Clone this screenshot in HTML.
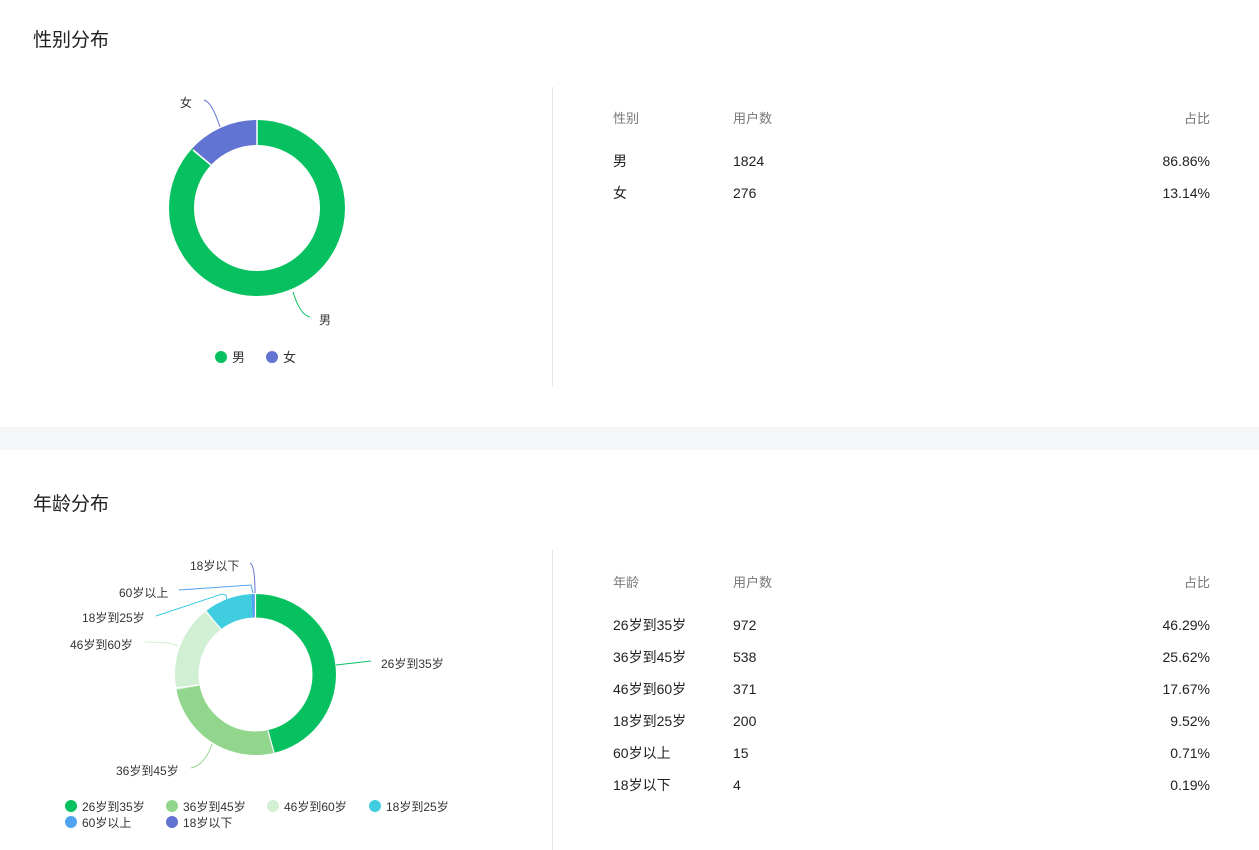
<!DOCTYPE html>
<html><head><meta charset="utf-8"><style>
body{margin:0;width:1259px;height:850px;background:#fff;font-family:"Liberation Sans","Noto Sans CJK SC",sans-serif;color:#222;position:relative;overflow:hidden}
.a{position:absolute;white-space:nowrap}
.t{font-size:19px;color:#222}
.h{font-size:13px;color:#777}
.r{font-size:14px;color:#222;line-height:18px}
</style></head><body>
<div class="a t" style="left:33px;top:25px">性别分布</div>
<div class="a" style="left:552px;top:87px;width:1px;height:300px;background:#e6e6e6"></div>
<div class="a" style="left:0;top:427px;width:1259px;height:23px;background:#f5f6f8"></div>
<div class="a t" style="left:33px;top:489px">年龄分布</div>
<div class="a" style="left:552px;top:550px;width:1px;height:300px;background:#e6e6e6"></div>

<svg class="a" style="left:0;top:0" width="552" height="850">
<g transform="rotate(-90 257 208)" fill="none" stroke-width="25">
<circle cx="257" cy="208" r="75.5" stroke="#07c160" stroke-dasharray="412.1 1000"/>
<circle cx="257" cy="208" r="75.5" stroke="#6274d1" stroke-dasharray="62.3 1000" stroke-dashoffset="-412.1"/>
</g>
<line x1="257" y1="120" x2="257" y2="146" stroke="#fff" stroke-width="1.5"/>
<line x1="193" y1="150" x2="211" y2="165" stroke="#fff" stroke-width="1.5"/>
<path d="M204 100 Q212 102 220 127" stroke="#6274d1" fill="none"/>
<path d="M293 292 Q300 315 310 317" stroke="#07c160" fill="none"/>
<text x="180" y="107" font-size="12" fill="#333">女</text>
<text x="319" y="324" font-size="12" fill="#333">男</text>
<circle cx="221" cy="357" r="6" fill="#07c160"/><text x="232" y="362" font-size="13" fill="#333">男</text>
<circle cx="272" cy="357" r="6" fill="#6274d1"/><text x="283" y="362" font-size="13" fill="#333">女</text>

<g transform="rotate(-90 255.5 674.5)" fill="none" stroke-width="23.5">
<circle cx="255.5" cy="674.5" r="68.75" stroke="#07c160" stroke-dasharray="199.96 1000"/>
<circle cx="255.5" cy="674.5" r="68.75" stroke="#91d68c" stroke-dasharray="110.67 1000" stroke-dashoffset="-199.96"/>
<circle cx="255.5" cy="674.5" r="68.75" stroke="#d1f0d3" stroke-dasharray="76.33 1000" stroke-dashoffset="-310.63"/>
<circle cx="255.5" cy="674.5" r="68.75" stroke="#40cde0" stroke-dasharray="41.12 1000" stroke-dashoffset="-386.96"/>
<circle cx="255.5" cy="674.5" r="68.75" stroke="#4ea4f0" stroke-dasharray="3.07 1000" stroke-dashoffset="-428.08"/>
<circle cx="255.5" cy="674.5" r="68.75" stroke="#6274d1" stroke-dasharray="0.82 1000" stroke-dashoffset="-431.15"/>
</g>
<g stroke="#fff" stroke-width="1.2">
<line x1="255.5" y1="593" x2="255.5" y2="618"/>
<line x1="268" y1="731" x2="275" y2="756"/>
<line x1="175" y1="688" x2="199" y2="685"/>
<line x1="205" y1="611" x2="221" y2="629"/>
</g>
<path d="M336 665 L371 661" stroke="#07c160" fill="none"/>
<path d="M212 744 Q205 765 191 768" stroke="#91d68c" fill="none"/>
<path d="M145 642 L170 643 L178 646" stroke="#d1f0d3" fill="none"/>
<path d="M156 616 L222 594 L226 595 L227 601" stroke="#40cde0" fill="none"/>
<path d="M179 590 L251 585 L253 593" stroke="#4ea4f0" fill="none"/>
<path d="M250 563 Q255 565 255 593" stroke="#6274d1" fill="none"/>
<text x="381" y="668" font-size="12" fill="#333">26岁到35岁</text>
<text x="116" y="775" font-size="12" fill="#333">36岁到45岁</text>
<text x="70" y="649" font-size="12" fill="#333">46岁到60岁</text>
<text x="82" y="622" font-size="12" fill="#333">18岁到25岁</text>
<text x="119" y="597" font-size="12" fill="#333">60岁以上</text>
<text x="190" y="570" font-size="12" fill="#333">18岁以下</text>
<g font-size="12" fill="#333">
<circle cx="71" cy="806" r="6" fill="#07c160"/><text x="82" y="811">26岁到35岁</text>
<circle cx="172" cy="806" r="6" fill="#91d68c"/><text x="183" y="811">36岁到45岁</text>
<circle cx="273" cy="806" r="6" fill="#d1f0d3"/><text x="284" y="811">46岁到60岁</text>
<circle cx="375" cy="806" r="6" fill="#40cde0"/><text x="386" y="811">18岁到25岁</text>
<circle cx="71" cy="822" r="6" fill="#4ea4f0"/><text x="82" y="827">60岁以上</text>
<circle cx="172" cy="822" r="6" fill="#6274d1"/><text x="183" y="827">18岁以下</text>
</g>
</svg>

<div class="a h" style="left:613px;top:108px">性别</div>
<div class="a h" style="left:733px;top:108px">用户数</div>
<div class="a h" style="right:49px;top:108px">占比</div>
<div class="a r" style="left:613px;top:152px">男</div><div class="a r" style="left:733px;top:152px">1824</div><div class="a r" style="right:49px;top:152px">86.86%</div>
<div class="a r" style="left:613px;top:184px">女</div><div class="a r" style="left:733px;top:184px">276</div><div class="a r" style="right:49px;top:184px">13.14%</div>

<div class="a h" style="left:613px;top:572px">年龄</div>
<div class="a h" style="left:733px;top:572px">用户数</div>
<div class="a h" style="right:49px;top:572px">占比</div>
<div class="a r" style="left:613px;top:616px">26岁到35岁</div><div class="a r" style="left:733px;top:616px">972</div><div class="a r" style="right:49px;top:616px">46.29%</div>
<div class="a r" style="left:613px;top:648px">36岁到45岁</div><div class="a r" style="left:733px;top:648px">538</div><div class="a r" style="right:49px;top:648px">25.62%</div>
<div class="a r" style="left:613px;top:680px">46岁到60岁</div><div class="a r" style="left:733px;top:680px">371</div><div class="a r" style="right:49px;top:680px">17.67%</div>
<div class="a r" style="left:613px;top:712px">18岁到25岁</div><div class="a r" style="left:733px;top:712px">200</div><div class="a r" style="right:49px;top:712px">9.52%</div>
<div class="a r" style="left:613px;top:744px">60岁以上</div><div class="a r" style="left:733px;top:744px">15</div><div class="a r" style="right:49px;top:744px">0.71%</div>
<div class="a r" style="left:613px;top:776px">18岁以下</div><div class="a r" style="left:733px;top:776px">4</div><div class="a r" style="right:49px;top:776px">0.19%</div>
</body></html>
